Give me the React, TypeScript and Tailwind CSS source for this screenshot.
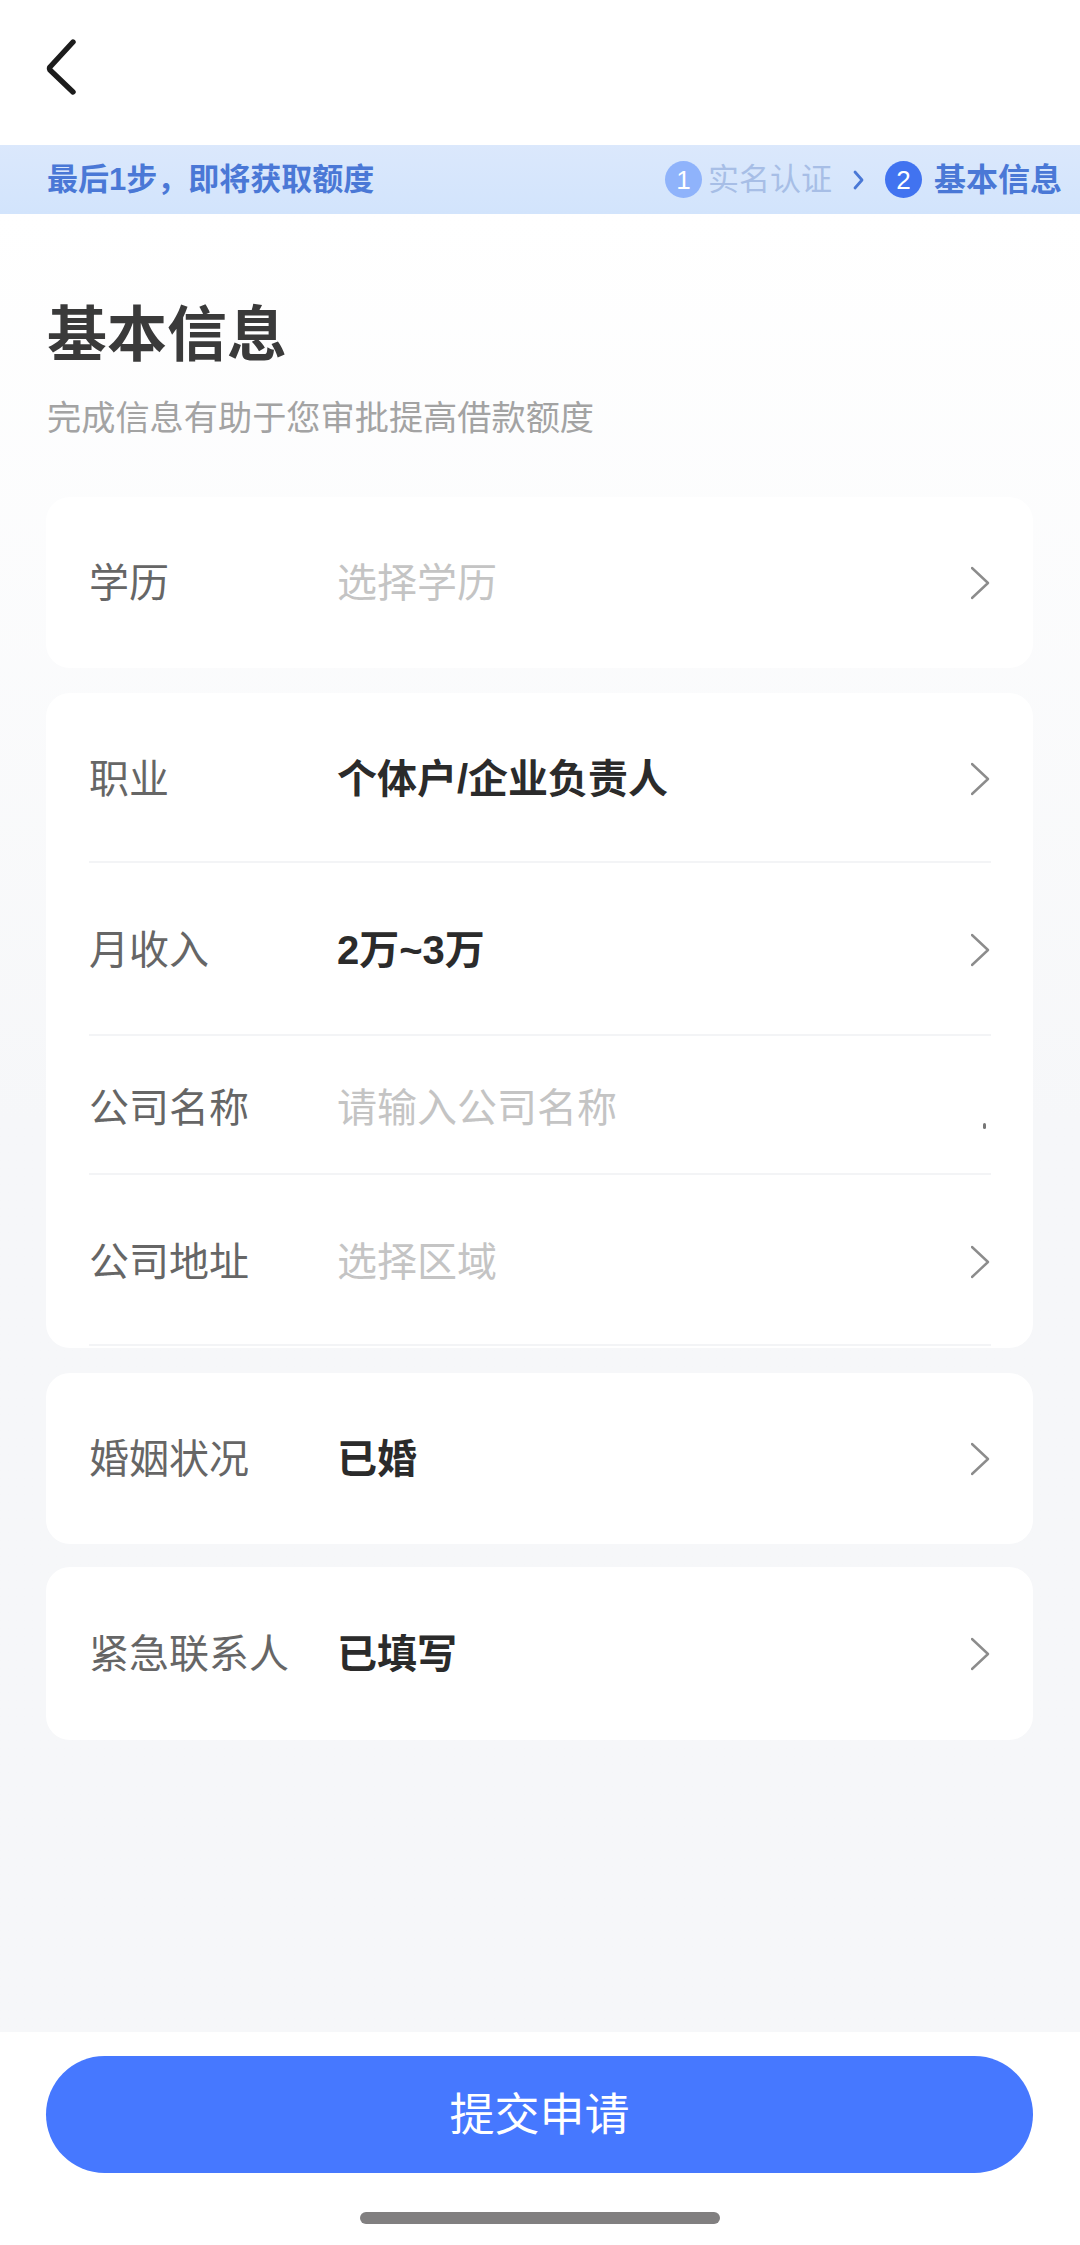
import React from 'react'

const FONT = "font-['Liberation_Sans','Noto_Sans_CJK_SC',sans-serif]"

const Chevron = () => (
  <svg width="20" height="34" viewBox="0 0 20 34" fill="none" className="shrink-0">
    <path d="M1 2 L17 17 L1 32" stroke="#8c8c8c" strokeWidth="2.4" strokeLinecap="round" strokeLinejoin="round" />
  </svg>
)

interface RowProps {
  label: string
  value: string
  filled?: boolean
  className: string
  divider?: boolean
  noArrow?: boolean
}

const Row: React.FC<RowProps> = ({ label, value, filled, className, divider, noArrow }) => {
  return (
    <div className={`relative flex items-center ${className} ${divider ? 'border-b-2 border-[#f3f4f6]' : ''}`}>
      <div className="w-[248px] shrink-0 text-[40px] leading-none text-[#666666]">{label}</div>
      <div className={`flex-1 text-[40px] leading-none ${filled ? 'font-bold text-[#2b2b2b]' : 'text-[#c4c4c4]'}`}>
        {value}
      </div>
      {noArrow ? (
        <div className="absolute right-[5px] bottom-[44px] h-[6px] w-[3px] rounded-full bg-[#777777]" />
      ) : (
        <Chevron />
      )}
    </div>
  )
}

export default function App() {
  return (
    <div className={`flex h-[2245px] w-[1080px] flex-col overflow-hidden bg-white ${FONT}`}>
      <header className="flex h-[145px] shrink-0 items-start pl-[45px] pt-[39px]">
        <svg width="32" height="56" viewBox="0 0 32 56" fill="none">
          <path d="M28 3 L5 28 Q4 29 5 31 L28 53" stroke="#1c1c1c" strokeWidth="5.4" strokeLinecap="round" strokeLinejoin="round" />
        </svg>
      </header>

      <div className="flex h-[69px] shrink-0 items-center bg-gradient-to-b from-[#dbe8fc] to-[#d2e4fc] pl-[47px] pr-[18px]">
        <span className="flex-1 text-[31px] font-bold leading-none text-[#4a78d6]">最后1步，即将获取额度</span>
        <div className="flex items-center">
          <span className="flex h-[37px] w-[37px] items-center justify-center rounded-full bg-[#8fb3fb] text-[26px] leading-none text-white">1</span>
          <span className="ml-[6px] text-[31px] leading-none text-[#a7bee6]">实名认证</span>
          <svg width="14" height="22" viewBox="0 0 14 22" fill="none" className="ml-[20px]">
            <path d="M3 3 L10 11 L3 19" stroke="#4a78d6" strokeWidth="2.8" strokeLinecap="round" strokeLinejoin="round" />
          </svg>
          <span className="ml-[19px] flex h-[37px] w-[37px] items-center justify-center rounded-full bg-[#4173f0] text-[26px] leading-none text-white">2</span>
          <span className="ml-[12px] text-[32px] font-bold leading-none text-[#4a78d6]">基本信息</span>
        </div>
      </div>

      <main className="flex flex-1 flex-col bg-gradient-to-b from-white to-[#f6f7f9] to-50% pl-[46px] pr-[47px]">
        <h1 className="ml-[1px] mt-[89px] text-[60px] font-bold leading-[66px] text-[#3a3a3a]">基本信息</h1>
        <p className="ml-[1px] mt-[32px] text-[34.2px] leading-[34px] text-[#a3a3a3]">完成信息有助于您审批提高借款额度</p>

        <section className="mt-[62px] rounded-[24px] bg-white pl-[43px] pr-[42px]">
          <Row label="学历" value="选择学历" className="h-[171px]" />
        </section>

        <section className="mt-[25px] rounded-[24px] bg-white pb-[2px] pl-[43px] pr-[42px]">
          <Row label="职业" value="个体户/企业负责人" filled className="h-[170px] pt-[4px]" divider />
          <Row label="月收入" value="2万~3万" filled className="h-[173px] pt-[3px]" divider />
          <Row label="公司名称" value="请输入公司名称" className="h-[139px] pt-[6px]" divider noArrow />
          <Row label="公司地址" value="选择区域" className="h-[171px] pt-[4px]" divider />
        </section>

        <section className="mt-[25px] rounded-[24px] bg-white pl-[43px] pr-[42px]">
          <Row label="婚姻状况" value="已婚" filled className="h-[171px]" />
        </section>

        <section className="mt-[23px] rounded-[24px] bg-white pl-[43px] pr-[42px]">
          <Row label="紧急联系人" value="已填写" filled className="h-[173px]" />
        </section>
      </main>

      <footer className="flex h-[213px] shrink-0 flex-col items-center bg-white pl-[46px] pr-[47px] pt-[24px]">
        <button className="flex h-[117px] w-full items-center justify-center rounded-full bg-[#4678ff] pt-[2px] text-[45px] leading-none text-white">
          提交申请
        </button>
        <div className="mt-[39px] h-[12px] w-[360px] rounded-full bg-[#817f80]" />
      </footer>
    </div>
  )
}
